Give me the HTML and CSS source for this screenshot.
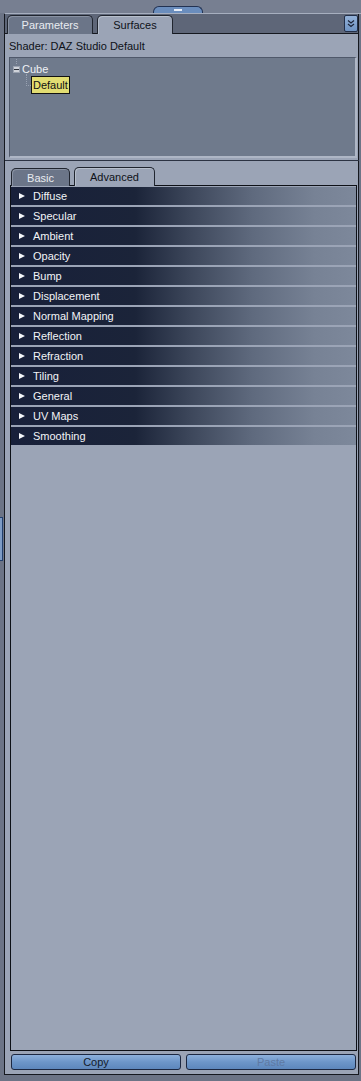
FILE: index.html
```html
<!DOCTYPE html>
<html>
<head>
<meta charset="utf-8">
<link rel="stylesheet" href="styles.css">
</head>
<body>
<div class="app">
  <div class="top">
    <div class="handle"><span class="grip"></span></div>
  </div>
  <div class="hline"></div>
  <div class="main">
    <div class="gutter"><div class="bracket"></div></div>
    <div class="frame">
      <div class="tabbar">
        <div class="tab">Parameters</div>
        <div class="tab active">Surfaces</div>
        <div class="spacer"></div>
        <div class="menu-btn">
          <svg width="8" height="9" viewBox="0 0 8 9"><path d="M1 1.5 L4 4 L7 1.5 M1 5 L4 7.5 L7 5" fill="none" stroke="#1c2438" stroke-width="1.2"/></svg>
        </div>
      </div>
      <div class="panel">
        <div class="shader">Shader: DAZ Studio Default</div>
        <div class="tree">
          <div class="root-line"></div>
          <div class="root">
            <span class="minus"><span></span></span>
            <span class="root-label">Cube</span>
          </div>
          <div class="child">
            <span class="connector"></span>
            <span class="sel">Default</span>
          </div>
        </div>
        <div class="sep"></div>
        <div class="tabs2">
          <div class="tab2">Basic</div>
          <div class="tab2 active">Advanced</div>
        </div>
        <div class="list">
          <div class="row"><i class="tri"></i>Diffuse</div>
          <div class="row"><i class="tri"></i>Specular</div>
          <div class="row"><i class="tri"></i>Ambient</div>
          <div class="row"><i class="tri"></i>Opacity</div>
          <div class="row"><i class="tri"></i>Bump</div>
          <div class="row"><i class="tri"></i>Displacement</div>
          <div class="row"><i class="tri"></i>Normal Mapping</div>
          <div class="row"><i class="tri"></i>Reflection</div>
          <div class="row"><i class="tri"></i>Refraction</div>
          <div class="row"><i class="tri"></i>Tiling</div>
          <div class="row"><i class="tri"></i>General</div>
          <div class="row"><i class="tri"></i>UV Maps</div>
          <div class="row"><i class="tri"></i>Smoothing</div>
        </div>
        <div class="buttons">
          <div class="btn">Copy</div>
          <div class="btn disabled">Paste</div>
        </div>
      </div>
    </div>
    <div class="rgutter"></div>
  </div>
</div>
</body>
</html>
```
FILE: styles.css
```css
* { box-sizing: border-box; }
html, body { margin: 0; padding: 0; }
body {
  background: #6c7486;
  font-family: "Liberation Sans", Arial, sans-serif;
  font-size: 11px;
  color: #0e1118;
}
.app { width: 361px; height: 1081px; overflow: hidden; }
.top {
  height: 13px;
  background: #777f91;
  display: flex;
  justify-content: center;
  align-items: flex-end;
  padding-right: 5px;
}
.handle {
  width: 50px;
  height: 7px;
  background: #6a8dbd;
  border: 1px solid #223252;
  border-bottom: none;
  border-radius: 6px 6px 0 0;
  display: flex;
  justify-content: center;
  align-items: flex-start;
  padding-top: 2px;
}
.grip { width: 8px; height: 2px; background: #e8eef8; }
.hline { height: 1px; background: #a7afbf; margin-left: 5px; }
.main { display: flex; height: 1061px; }
.gutter {
  width: 4px;
  background: #6c7486;
  display: flex;
  flex-direction: column;
}
.bracket {
  margin-top: 503px;
  width: 3px;
  height: 44px;
  border: 1px solid #22406e;
  border-left: none;
  background: #7e9cc6;
}
.rgutter { width: 2px; background: #6c7486; }
.frame {
  flex: 1;
  border-left: 1px solid #15181f;
  border-right: 1px solid #15181f;
  border-bottom: 1px solid #15181f;
  display: flex;
  flex-direction: column;
  background: #9ba4b6;
}
.tabbar {
  height: 20px;
  background: #5e6678;
  display: flex;
  align-items: flex-end;
  padding-left: 2px;
  gap: 4px;
  border-bottom: 1px solid #15181f;
}
.tab {
  height: 19px;
  margin-bottom: -1px;
  border: 1px solid #20252f;
  border-bottom: none;
  border-radius: 5px 5px 0 0;
  background: #6b7588;
  color: #e9ecf1;
  display: flex;
  align-items: center;
  justify-content: center;
  width: 86px;
  box-shadow: inset 1px 1px 0 #8992a3;
}
.tab.active {
  width: 76px;
  background: #9ba4b6;
  color: #0e1118;
  box-shadow: inset 1px 1px 0 #b7bfcc;
}
.spacer { flex: 1; }
.menu-btn {
  align-self: flex-start;
  margin-top: 1px;
  width: 14px;
  height: 17px;
  background: linear-gradient(#93b1d8, #6f93c3);
  border: 1px solid #232f48;
  border-radius: 2px;
  display: flex;
  justify-content: center;
  align-items: center;
}
.panel {
  flex: 1;
  display: flex;
  flex-direction: column;
  padding-top: 6px;
}
.shader { height: 13px; line-height: 13px; padding-left: 4px; }
.tree {
  margin: 4px 1px 0 4px;
  height: 101px;
  background: #6f7a8c;
  border-top: 1px solid #4f586a;
  border-left: 1px solid #4f586a;
  border-bottom: 2px solid #aeb6c5;
  border-right: 2px solid #aeb6c5;
  display: flex;
  flex-direction: column;
}
.root-line {
  margin-left: 6px;
  height: 5px;
  width: 1px;
  margin-top: 1px;
  border-left: 1px dotted #98a1b1;
}
.root {
  display: flex;
  align-items: center;
  height: 10px;
  padding-left: 3px;
}
.minus {
  width: 7px;
  height: 7px;
  background: #cfd3da;
  border: 1px solid #9aa2b0;
  display: flex;
  align-items: center;
  justify-content: center;
}
.minus span { width: 5px; height: 1px; background: #2a2f38; }
.root-label { color: #eef1f5; margin-left: 2px; }
.child {
  display: flex;
  align-items: flex-start;
  padding-left: 16px;
}
.connector {
  width: 5px;
  height: 12px;
  border-left: 1px dotted #98a1b1;
  border-bottom: 1px dotted #98a1b1;
}
.sel {
  margin-top: 2px;
  height: 18px;
  padding: 0 1px;
  line-height: 16px;
  background: #e2dd72;
  border: 1px solid #111;
  color: #111;
}
.sep {
  margin-top: 2px;
  height: 1px;
  background: #2c3343;
  margin-right: -1px;
}
.tabs2 {
  margin-top: 6px;
  display: flex;
  gap: 4px;
  padding-left: 6px;
  height: 18px;
  align-items: flex-end;
  position: relative;
  z-index: 1;
}
.tab2 {
  height: 18px;
  width: 59px;
  margin-bottom: -1px;
  border: 1px solid #20252f;
  border-bottom: none;
  border-radius: 5px 5px 0 0;
  background: #6b7588;
  color: #e9ecf1;
  display: flex;
  align-items: center;
  justify-content: center;
  box-shadow: inset 1px 1px 0 #8992a3;
}
.tab2.active {
  width: 81px;
  background: #9ba4b6;
  color: #0e1118;
  box-shadow: inset 1px 1px 0 #b7bfcc;
  height: 19px;
}
.list {
  margin-left: 5px;
  margin-right: 1px;
  height: 866px;
  border: 1px solid #0d1017;
  padding-top: 1px;
  display: flex;
  flex-direction: column;
  gap: 2px;
  background: #9ba4b6;
}
.row {
  height: 18px;
  display: flex;
  align-items: center;
  padding-left: 8px;
  color: #f2f4f7;
  background: linear-gradient(90deg, #18203a 0%, #1b2439 36%, #3d475b 52%, #5f6a7e 70%, #778295 88%, #7d889b 100%);
}
.tri {
  width: 0;
  height: 0;
  border-left: 6px solid #f4f6f9;
  border-top: 3.5px solid transparent;
  border-bottom: 3.5px solid transparent;
  margin-right: 8px;
}
.buttons {
  margin-top: 3px;
  display: flex;
  gap: 5px;
  padding-left: 6px;
}
.btn {
  width: 170px;
  height: 16px;
  border: 1px solid #1c2842;
  border-radius: 3px;
  background: linear-gradient(#8db0dc, #6d96c9 50%, #5d87bc);
  display: flex;
  align-items: center;
  justify-content: center;
  color: #141b2a;
}
.btn.disabled { color: #5f7aa3; }
```
